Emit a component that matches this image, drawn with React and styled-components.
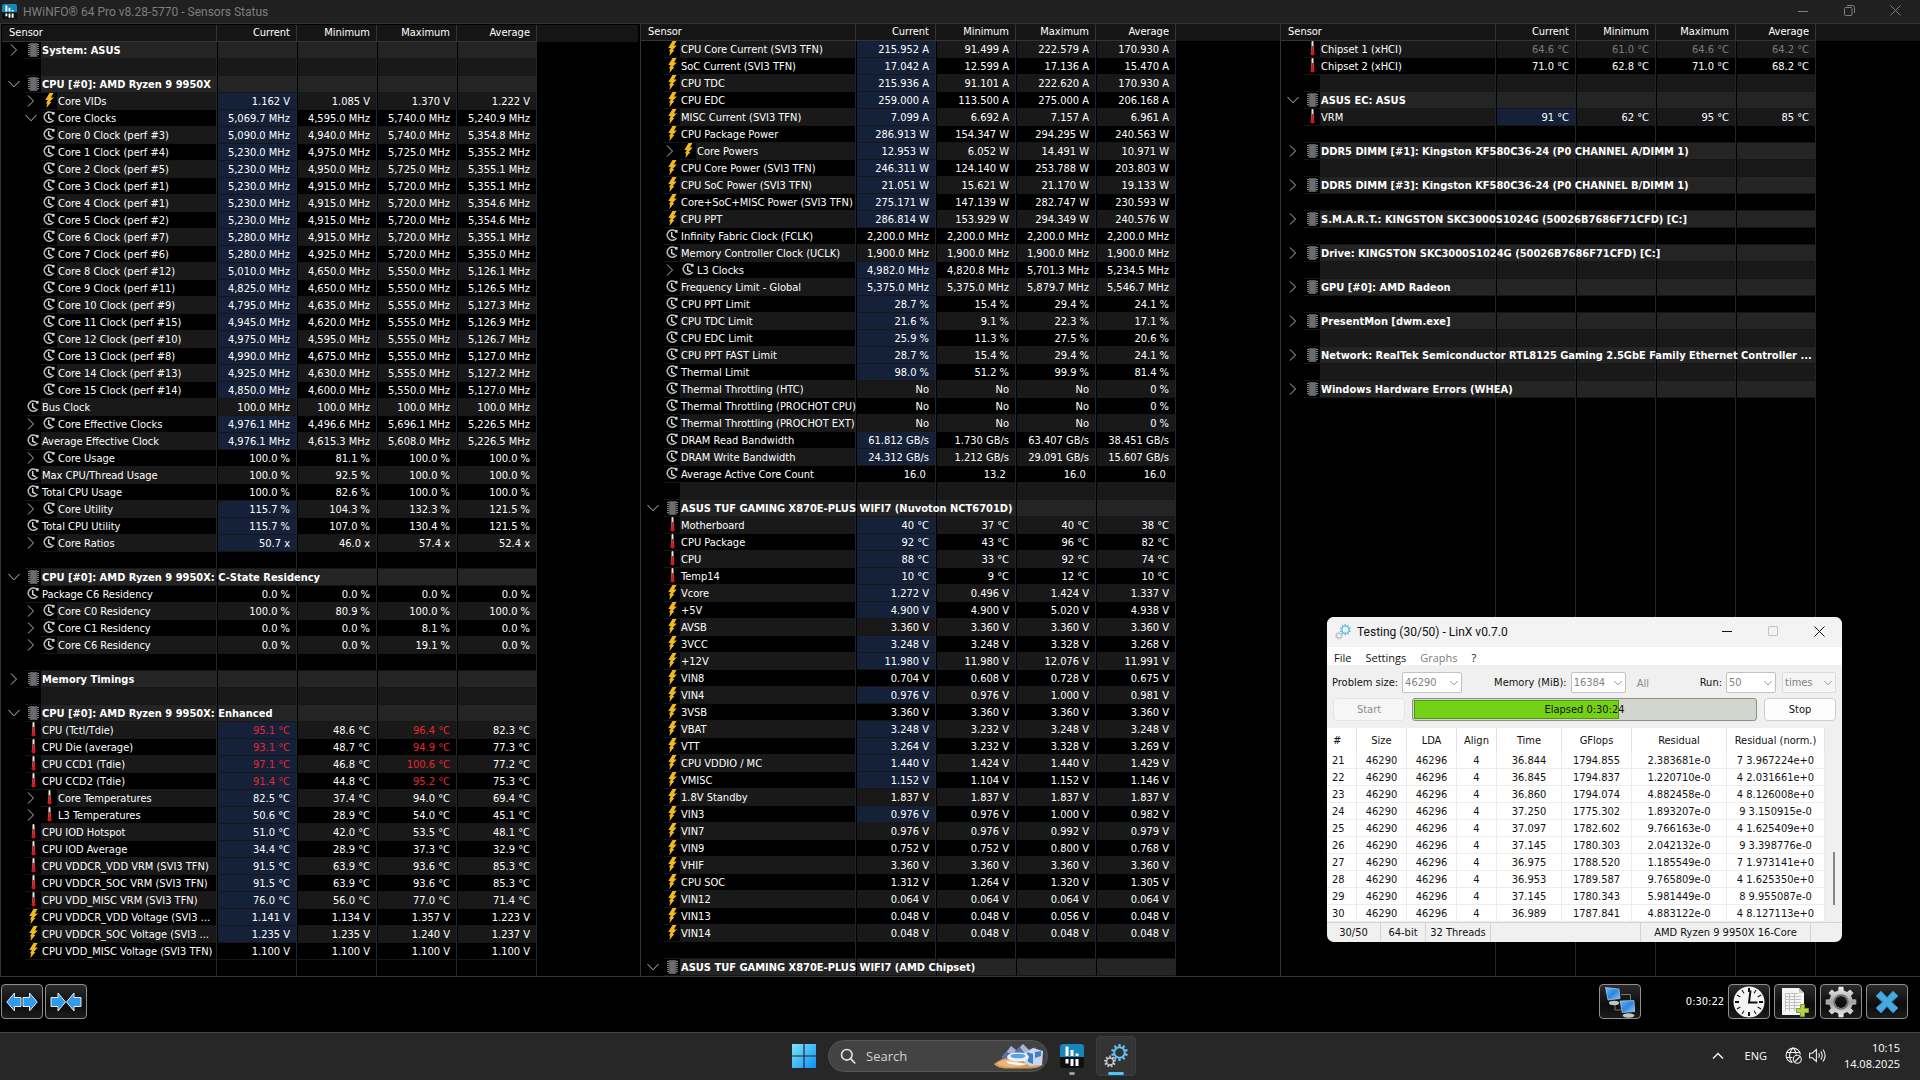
import React from "react";
import styled, { createGlobalStyle } from "styled-components";

/* ---------- palette and fonts ---------- */

const tahoma = '"DejaVu Sans Condensed", "DejaVu Sans", sans-serif';
const segoe = 'Roboto, "Open Sans", sans-serif';
const shell = '"Open Sans", "Noto Sans", sans-serif';

const color = {
  edge: "#343434",
  line: "#161616",
  divider: "#20262e",
  grey: "#191919",
  black: "#000",
  group: "#242424",
  live: "#152138",
};

const GlobalStyle = createGlobalStyle`
  *, *::before, *::after { box-sizing: border-box; }
  html, body { margin: 0; background: #000; }
  body { font: 11px/16px ${tahoma}; color: #fff; overflow: hidden; }
  button, input, select { font: inherit; color: inherit; margin: 0; padding: 0; }
  button { background: none; border: 0; }
  svg { display: block; }
`;

/* ---------- sensor data ---------- */
/* reading: [icon, tree level, name, unit, "current min max avg", marks]
   level: 0 leaf, 1 nested leaf, "+" collapsed branch, "-" expanded branch
   marks: b = live background on Current, r = alert colours, d = dimmed values */

const group = (name, open) => ({ kind: "group", name, open });
const gap = (tone) => ({ kind: "gap", tone });
const read = (icon, level, name, unit, values, marks = "") => ({
  kind: "read",
  icon,
  level,
  name,
  marks,
  values: values.split(" ").map((v) => v.replace("_", "\u00a0") + (unit ? " " + unit : "")),
});

const coreClocks = [
  [3, "5,090.0 4,940.0 5,740.0 5,354.8"],
  [4, "5,230.0 4,975.0 5,725.0 5,355.2"],
  [5, "5,230.0 4,950.0 5,725.0 5,355.1"],
  [1, "5,230.0 4,915.0 5,720.0 5,355.1"],
  [1, "5,230.0 4,915.0 5,720.0 5,354.6"],
  [2, "5,230.0 4,915.0 5,720.0 5,354.6"],
  [7, "5,280.0 4,915.0 5,720.0 5,355.1"],
  [6, "5,280.0 4,925.0 5,720.0 5,355.0"],
  [12, "5,010.0 4,650.0 5,550.0 5,126.1"],
  [11, "4,825.0 4,650.0 5,550.0 5,126.5"],
  [9, "4,795.0 4,635.0 5,555.0 5,127.3"],
  [15, "4,945.0 4,620.0 5,555.0 5,126.9"],
  [10, "4,975.0 4,595.0 5,555.0 5,126.7"],
  [8, "4,990.0 4,675.0 5,555.0 5,127.0"],
  [13, "4,925.0 4,630.0 5,555.0 5,127.2"],
  [14, "4,850.0 4,600.0 5,550.0 5,127.0"],
].map(([perf, v], i) => read("clock", 1, `Core ${i} Clock (perf #${perf})`, "MHz", v, "b"));

const panelOne = [
  group("System: ASUS", false),
  gap("grey"),
  group("CPU [#0]: AMD Ryzen 9 9950X", true),
  read("bolt", "+", "Core VIDs", "V", "1.162 1.085 1.370 1.222", "b"),
  read("clock", "-", "Core Clocks", "MHz", "5,069.7 4,595.0 5,740.0 5,240.9", "b"),
  ...coreClocks,
  read("clock", 0, "Bus Clock", "MHz", "100.0 100.0 100.0 100.0"),
  read("clock", "+", "Core Effective Clocks", "MHz", "4,976.1 4,496.6 5,696.1 5,226.5", "b"),
  read("clock", 0, "Average Effective Clock", "MHz", "4,976.1 4,615.3 5,608.0 5,226.5", "b"),
  read("clock", "+", "Core Usage", "%", "100.0 81.1 100.0 100.0"),
  read("clock", 0, "Max CPU/Thread Usage", "%", "100.0 92.5 100.0 100.0"),
  read("clock", 0, "Total CPU Usage", "%", "100.0 82.6 100.0 100.0"),
  read("clock", "+", "Core Utility", "%", "115.7 104.3 132.3 121.5", "b"),
  read("clock", 0, "Total CPU Utility", "%", "115.7 107.0 130.4 121.5", "b"),
  read("clock", "+", "Core Ratios", "x", "50.7 46.0 57.4 52.4", "b"),
  gap("black"),
  group("CPU [#0]: AMD Ryzen 9 9950X: C-State Residency", true),
  read("clock", 0, "Package C6 Residency", "%", "0.0 0.0 0.0 0.0"),
  read("clock", "+", "Core C0 Residency", "%", "100.0 80.9 100.0 100.0"),
  read("clock", "+", "Core C1 Residency", "%", "0.0 0.0 8.1 0.0"),
  read("clock", "+", "Core C6 Residency", "%", "0.0 0.0 19.1 0.0"),
  gap("black"),
  group("Memory Timings", false),
  gap("grey"),
  group("CPU [#0]: AMD Ryzen 9 9950X: Enhanced", true),
  read("temp", 0, "CPU (Tctl/Tdie)", "°C", "95.1 48.6 96.4 82.3", "br"),
  read("temp", 0, "CPU Die (average)", "°C", "93.1 48.7 94.9 77.3", "br"),
  read("temp", 0, "CPU CCD1 (Tdie)", "°C", "97.1 46.8 100.6 77.2", "br"),
  read("temp", 0, "CPU CCD2 (Tdie)", "°C", "91.4 44.8 95.2 75.3", "br"),
  read("temp", "+", "Core Temperatures", "°C", "82.5 37.4 94.0 69.4", "b"),
  read("temp", "+", "L3 Temperatures", "°C", "50.6 28.9 54.0 45.1", "b"),
  read("temp", 0, "CPU IOD Hotspot", "°C", "51.0 42.0 53.5 48.1", "b"),
  read("temp", 0, "CPU IOD Average", "°C", "34.4 28.9 37.3 32.9", "b"),
  read("temp", 0, "CPU VDDCR_VDD VRM (SVI3 TFN)", "°C", "91.5 63.9 93.6 85.3", "b"),
  read("temp", 0, "CPU VDDCR_SOC VRM (SVI3 TFN)", "°C", "91.5 63.9 93.6 85.3", "b"),
  read("temp", 0, "CPU VDD_MISC VRM (SVI3 TFN)", "°C", "76.0 56.0 77.0 71.4", "b"),
  read("bolt", 0, "CPU VDDCR_VDD Voltage (SVI3 ...", "V", "1.141 1.134 1.357 1.223", "b"),
  read("bolt", 0, "CPU VDDCR_SOC Voltage (SVI3 ...", "V", "1.235 1.235 1.240 1.237", "b"),
  read("bolt", 0, "CPU VDD_MISC Voltage (SVI3 TFN)", "V", "1.100 1.100 1.100 1.100"),
];

const panelTwo = [
  read("bolt", 0, "CPU Core Current (SVI3 TFN)", "A", "215.952 91.499 222.579 170.930", "b"),
  read("bolt", 0, "SoC Current (SVI3 TFN)", "A", "17.042 12.599 17.136 15.470", "b"),
  read("bolt", 0, "CPU TDC", "A", "215.936 91.101 222.620 170.930", "b"),
  read("bolt", 0, "CPU EDC", "A", "259.000 113.500 275.000 206.168", "b"),
  read("bolt", 0, "MISC Current (SVI3 TFN)", "A", "7.099 6.692 7.157 6.961", "b"),
  read("bolt", 0, "CPU Package Power", "W", "286.913 154.347 294.295 240.563", "b"),
  read("bolt", "+", "Core Powers", "W", "12.953 6.052 14.491 10.971", "b"),
  read("bolt", 0, "CPU Core Power (SVI3 TFN)", "W", "246.311 124.140 253.788 203.803", "b"),
  read("bolt", 0, "CPU SoC Power (SVI3 TFN)", "W", "21.051 15.621 21.170 19.133", "b"),
  read("bolt", 0, "Core+SoC+MISC Power (SVI3 TFN)", "W", "275.171 147.139 282.747 230.593", "b"),
  read("bolt", 0, "CPU PPT", "W", "286.814 153.929 294.349 240.576", "b"),
  read("clock", 0, "Infinity Fabric Clock (FCLK)", "MHz", "2,200.0 2,200.0 2,200.0 2,200.0"),
  read("clock", 0, "Memory Controller Clock (UCLK)", "MHz", "1,900.0 1,900.0 1,900.0 1,900.0"),
  read("clock", "+", "L3 Clocks", "MHz", "4,982.0 4,820.8 5,701.3 5,234.5", "b"),
  read("clock", 0, "Frequency Limit - Global", "MHz", "5,375.0 5,375.0 5,879.7 5,546.7", "b"),
  read("clock", 0, "CPU PPT Limit", "%", "28.7 15.4 29.4 24.1", "b"),
  read("clock", 0, "CPU TDC Limit", "%", "21.6 9.1 22.3 17.1", "b"),
  read("clock", 0, "CPU EDC Limit", "%", "25.9 11.3 27.5 20.6", "b"),
  read("clock", 0, "CPU PPT FAST Limit", "%", "28.7 15.4 29.4 24.1", "b"),
  read("clock", 0, "Thermal Limit", "%", "98.0 51.2 99.9 81.4", "b"),
  read("clock", 0, "Thermal Throttling (HTC)", "", "No No No 0_%"),
  read("clock", 0, "Thermal Throttling (PROCHOT CPU)", "", "No No No 0_%"),
  read("clock", 0, "Thermal Throttling (PROCHOT EXT)", "", "No No No 0_%"),
  read("clock", 0, "DRAM Read Bandwidth", "GB/s", "61.812 1.730 63.407 38.451", "b"),
  read("clock", 0, "DRAM Write Bandwidth", "GB/s", "24.312 1.212 29.091 15.607", "b"),
  read("clock", 0, "Average Active Core Count", "", "16.0_ 13.2_ 16.0_ 16.0_"),
  gap("grey"),
  group("ASUS TUF GAMING X870E-PLUS WIFI7 (Nuvoton NCT6701D)", true),
  read("temp", 0, "Motherboard", "°C", "40 37 40 38", "b"),
  read("temp", 0, "CPU Package", "°C", "92 43 96 82", "b"),
  read("temp", 0, "CPU", "°C", "88 33 92 74", "b"),
  read("temp", 0, "Temp14", "°C", "10 9 12 10", "b"),
  read("bolt", 0, "Vcore", "V", "1.272 0.496 1.424 1.337", "b"),
  read("bolt", 0, "+5V", "V", "4.900 4.900 5.020 4.938", "b"),
  read("bolt", 0, "AVSB", "V", "3.360 3.360 3.360 3.360"),
  read("bolt", 0, "3VCC", "V", "3.248 3.248 3.328 3.268", "b"),
  read("bolt", 0, "+12V", "V", "11.980 11.980 12.076 11.991", "b"),
  read("bolt", 0, "VIN8", "V", "0.704 0.608 0.728 0.675"),
  read("bolt", 0, "VIN4", "V", "0.976 0.976 1.000 0.981", "b"),
  read("bolt", 0, "3VSB", "V", "3.360 3.360 3.360 3.360"),
  read("bolt", 0, "VBAT", "V", "3.248 3.232 3.248 3.248", "b"),
  read("bolt", 0, "VTT", "V", "3.264 3.232 3.328 3.269", "b"),
  read("bolt", 0, "CPU VDDIO / MC", "V", "1.440 1.424 1.440 1.429", "b"),
  read("bolt", 0, "VMISC", "V", "1.152 1.104 1.152 1.146", "b"),
  read("bolt", 0, "1.8V Standby", "V", "1.837 1.837 1.837 1.837"),
  read("bolt", 0, "VIN3", "V", "0.976 0.976 1.000 0.982", "b"),
  read("bolt", 0, "VIN7", "V", "0.976 0.976 0.992 0.979"),
  read("bolt", 0, "VIN9", "V", "0.752 0.752 0.800 0.768"),
  read("bolt", 0, "VHIF", "V", "3.360 3.360 3.360 3.360"),
  read("bolt", 0, "CPU SOC", "V", "1.312 1.264 1.320 1.305"),
  read("bolt", 0, "VIN12", "V", "0.064 0.064 0.064 0.064"),
  read("bolt", 0, "VIN13", "V", "0.048 0.048 0.056 0.048"),
  read("bolt", 0, "VIN14", "V", "0.048 0.048 0.048 0.048"),
  gap("black"),
  group("ASUS TUF GAMING X870E-PLUS WIFI7 (AMD Chipset)", true),
];

const panelThree = [
  read("temp", 0, "Chipset 1 (xHCI)", "°C", "64.6 61.0 64.6 64.2", "d"),
  read("temp", 0, "Chipset 2 (xHCI)", "°C", "71.0 62.8 71.0 68.2"),
  gap("grey"),
  group("ASUS EC: ASUS", true),
  read("temp", 0, "VRM", "°C", "91 62 95 85", "b"),
  gap("black"),
  group("DDR5 DIMM [#1]: Kingston KF580C36-24 (P0 CHANNEL A/DIMM 1)", false),
  gap("grey"),
  group("DDR5 DIMM [#3]: Kingston KF580C36-24 (P0 CHANNEL B/DIMM 1)", false),
  gap("black"),
  group("S.M.A.R.T.: KINGSTON SKC3000S1024G (50026B7686F71CFD) [C:]", false),
  gap("black"),
  group("Drive: KINGSTON SKC3000S1024G (50026B7686F71CFD) [C:]", false),
  gap("grey"),
  group("GPU [#0]: AMD Radeon", false),
  gap("black"),
  group("PresentMon [dwm.exe]", false),
  gap("grey"),
  group("Network: RealTek Semiconductor RTL8125 Gaming 2.5GbE Family Ethernet Controller ...", false),
  gap("grey"),
  group("Windows Hardware Errors (WHEA)", false),
];

const withTones = (rows) => {
  let last = "black";
  return rows.map((row) => {
    const tone = row.tone || (last === "grey" ? "black" : "grey");
    last = tone;
    return { ...row, tone: row.kind === "group" ? "group" : tone };
  });
};

const runs = [
  ["21", "36.844", "1794.855", "2.383681e-0", "7 3.967224e+0"],
  ["22", "36.845", "1794.837", "1.220710e-0", "4 2.031661e+0"],
  ["23", "36.860", "1794.074", "4.882458e-0", "4 8.126008e+0"],
  ["24", "37.250", "1775.302", "1.893207e-0", "9 3.150915e-0"],
  ["25", "37.097", "1782.602", "9.766163e-0", "4 1.625409e+0"],
  ["26", "37.145", "1780.303", "2.042132e-0", "9 3.398776e-0"],
  ["27", "36.975", "1788.520", "1.185549e-0", "7 1.973141e+0"],
  ["28", "36.953", "1789.587", "9.765809e-0", "4 1.625350e+0"],
  ["29", "37.145", "1780.343", "5.981449e-0", "8 9.955087e-0"],
  ["30", "36.989", "1787.841", "4.883122e-0", "4 8.127113e+0"],
];

/* ---------- drawings ---------- */

const gearPath = (cx, cy, outer, inner, teeth) => {
  const step = (Math.PI * 2) / teeth;
  const pts = [];
  for (let i = 0; i < teeth; i++) {
    const a = i * step;
    [[-0.3, inner], [-0.2, outer], [0.2, outer], [0.3, inner]].forEach(([k, r]) => {
      pts.push(`${(cx + r * Math.sin(a + k * step)).toFixed(2)} ${(cy - r * Math.cos(a + k * step)).toFixed(2)}`);
    });
  }
  return `M${pts.join("L")}Z`;
};

const hole = (cx, cy, r) => `M${cx - r} ${cy}a${r} ${r} 0 1 0 ${2 * r} 0a${r} ${r} 0 1 0 ${-2 * r} 0Z`;

const ChipIcon = () => (
  <svg width="11" height="14" viewBox="0 0 11 14">
    <path d="M0 1.5h11M0 3.5h11M0 5.5h11M0 7.5h11M0 9.5h11M0 11.5h11" stroke="#8a8a8a" />
    <rect x="1.5" width="8" height="14" fill="#58585b" />
    <rect x="3" y="1" width="5" height="12" fill="#6c6c70" />
  </svg>
);

const BoltIcon = () => (
  <svg width="9" height="15" viewBox="0 0 9 15">
    <path d="M4.5 0h4L6 4.6h2.8L4.6 9H6.4L1.4 15l.8-4.6H1L2.8 7H.3Z" fill="#f0b91c" />
  </svg>
);

const ClockIcon = () => (
  <svg width="12" height="13" viewBox="0 0 12 13" fill="none">
    <path d="M9 1.7A5.1 5.1 0 1 0 10.6 9" stroke="#b9b9b9" strokeWidth="1.7" />
    <path d="M5.7 3v4.2l3 1.6" stroke="#d6d6d6" strokeWidth="1.5" />
    <path d="M9 .9h2.6v2.8H9Z" fill="#cfcfcf" />
  </svg>
);

const TempIcon = () => (
  <svg width="5" height="15" viewBox="0 0 5 15">
    <rect x="1.5" width="2" height="13" rx="1" fill="#e8e8e8" />
    <rect x="1.5" y="5" width="2" height="8" fill="#d8151b" />
    <circle cx="2.5" cy="12.4" r="2.1" fill="#d8151b" />
  </svg>
);

const icons = { chip: ChipIcon, bolt: BoltIcon, clock: ClockIcon, temp: TempIcon };

const ChevronRight = () => (
  <svg width="8" height="12" viewBox="0 0 8 12" fill="none" stroke="#b8b8b8">
    <path d="M1 .5l5.5 5.5L1 11.5" />
  </svg>
);

const ChevronDown = ({ size = 12, stroke = "#b8b8b8" }) => (
  <svg width={size} height={size / 2 + 2} viewBox="0 0 12 8" fill="none" stroke={stroke}>
    <path d="M.5 1L6 6.8 11.5 1" strokeWidth={12 / size} />
  </svg>
);

const HwLogo = ({ size }) => (
  <svg width={size} height={size} viewBox="0 0 24 24">
    <rect width="24" height="24" rx="3" fill="#0f0f10" />
    <path d="M0 13V3a3 3 0 0 1 3-3h18a3 3 0 0 1 3 3v10Z" fill="#1786bd" />
    <path d="M5.5 2.5h3V12h-3ZM10.5 6h3v6h-3ZM15.5 9.5h3V12h-3ZM5.5 15h3v4.5h-3ZM10.5 15h3v7h-3ZM15.5 15h3v7h-3Z" fill="#fff" />
  </svg>
);

const GearsLogo = ({ size, small }) => (
  <svg width={size} height={size} viewBox="0 0 24 24" fillRule="evenodd">
    <path d={gearPath(15.5, 8.5, 8.5, 6.2, 10) + hole(15.5, 8.5, 4.3)} fill="#63c0ee" />
    <path d={gearPath(6, 17.5, 6, 4.2, 9) + hole(6, 17.5, 2.7)} fill={small} />
  </svg>
);

const ArrowsOut = () => (
  <svg width="32" height="20" viewBox="0 0 32 20" fill="#2f9bea" stroke="#e4eef5" strokeWidth="1">
    <path d="M.8 10L8.5 1v4.5H15v9H8.5V19Z" />
    <path d="M31.2 10L23.5 1v4.5H17v9h6.5V19Z" />
  </svg>
);

const ArrowsIn = () => (
  <svg width="32" height="20" viewBox="0 0 32 20" fill="#2f9bea" stroke="#e4eef5" strokeWidth="1">
    <path d="M15.5 10L8 1v4.5H1v9h7V19Z" />
    <path d="M16.5 10L24 1v4.5h7v9h-7V19Z" />
  </svg>
);

const NetworkIcon = () => (
  <svg width="32" height="32" viewBox="0 0 32 32">
    <defs>
      <linearGradient id="screen" x1="0" y1="0" x2="1" y2="1">
        <stop offset="0" stopColor="#6db8f5" />
        <stop offset=".5" stopColor="#2b86e0" />
        <stop offset="1" stopColor="#8fc8f8" />
      </linearGradient>
    </defs>
    <path d="M17 8.5h9.5V14M11 18v6h6" fill="none" stroke="#777" />
    <ellipse cx="10" cy="17" rx="5" ry="2.2" fill="#bfc6cb" />
    <path d="M1.5 1.5L15 3l1 9.5L4 14Z" fill="url(#screen)" stroke="#cfe3f2" strokeWidth=".6" />
    <ellipse cx="24.5" cy="29.5" rx="6" ry="2.2" fill="#bfc6cb" />
    <path d="M16 15l14-.5.7 11-12.5 1Z" fill="url(#screen)" stroke="#cfe3f2" strokeWidth=".6" />
  </svg>
);

const ClockFace = () => (
  <svg width="32" height="32" viewBox="0 0 32 32">
    <circle cx="16" cy="16" r="15.5" fill="#f4f4f4" />
    {[0, 30, 60, 90, 120, 150, 180, 210, 240, 270, 300, 330].map((a) => (
      <path key={a} d="M16 2v4" stroke="#111" strokeWidth={a % 90 ? 1 : 2} transform={`rotate(${a} 16 16)`} />
    ))}
    <path d="M17.5 4.5L16 16.5h8.5" fill="none" stroke="#111" strokeWidth="2" />
  </svg>
);

const SheetIcon = () => (
  <svg width="30" height="30" viewBox="0 0 30 30">
    <path d="M2 1h17l5 5v22H2Z" fill="#f5f5f5" />
    <path d="M19 1v5h5Z" fill="#c4c4c4" />
    <path d="M5 6.5h13M5 9.5h16M5 12.5h16M5 15.5h16M5 18.5h16M5 21.5h16M5.5 6v18M9.5 6v18M14.5 6v18" stroke="#c0c0c0" fill="none" />
    <path d="M20.5 17.5h4v4h4v4h-4v4h-4v-4h-4v-4h4Z" fill="#b5d34a" stroke="#83a02a" />
  </svg>
);

const GearIcon = () => (
  <svg width="32" height="32" viewBox="0 0 32 32">
    <defs>
      <linearGradient id="steel" x1="0" y1="0" x2="0" y2="1">
        <stop offset="0" stopColor="#f2f2f2" />
        <stop offset=".5" stopColor="#a2a2a2" />
        <stop offset="1" stopColor="#ededed" />
      </linearGradient>
    </defs>
    <path fillRule="evenodd" d={gearPath(16, 16, 15.5, 11.8, 8) + hole(16, 16, 6)} fill="url(#steel)" />
    <circle cx="16" cy="16" r="7" fill="none" stroke="#6d6d6d" strokeWidth="1.5" />
  </svg>
);

const CrossIcon = () => (
  <svg width="24" height="24" viewBox="0 0 24 24">
    <path d="M6 1l6 6.5L18 1l5 5-6.5 6L23 18l-5 5-6-6.5L6 23l-5-5 6.5-6L1 6Z" fill="#47a9de" stroke="#2584b8" />
  </svg>
);

const WindowsLogo = () => (
  <svg width="24" height="24" viewBox="0 0 24 24">
    <defs>
      <linearGradient id="pane" x1="0" y1="0" x2="24" y2="24" gradientUnits="userSpaceOnUse">
        <stop offset="0" stopColor="#7de3fb" />
        <stop offset="1" stopColor="#0a90f5" />
      </linearGradient>
    </defs>
    <path d="M0 0h11.4v11.4H0ZM12.6 0H24v11.4H12.6ZM0 12.6h11.4V24H0ZM12.6 12.6H24V24H12.6Z" fill="url(#pane)" />
  </svg>
);

const SearchIcon = () => (
  <svg width="16" height="16" viewBox="0 0 16 16" fill="none" stroke="#e6e6e6" strokeWidth="1.6">
    <circle cx="6.8" cy="6.8" r="5.3" />
    <path d="M10.6 10.6l4.2 4.4" strokeLinecap="round" />
  </svg>
);

const SearchArt = () => (
  <svg width="50" height="26" viewBox="0 0 50 26">
    <path d="M8 13L17 3l5 4 7-6 6 6 6-3 7 9v7H8Z" fill="#59709f" />
    <path d="M13 9l4-6 5 4-3 5ZM26 4l3-3 6 6-4 4Z" fill="#a9b3d4" />
    <path d="M0 21q7-6 15-6 12 0 34 6-3 4-12 4.5H12Q3 25 0 21Z" fill="#d69a5a" />
    <path d="M3 20q8-5 16-3l12 5q-8 3-17 2T3 20Z" fill="#eab77a" />
    <path d="M30 10l9-5 10 3-1 14-12 1-6-4Z" fill="#c9d8ec" />
    <path d="M33 9l6 2v10l-5-2ZM41 9l6-1v5l-6 2Z" fill="#3f7fc4" />
    <ellipse cx="24" cy="14" rx="11" ry="4.5" fill="#e8f1fa" />
    <ellipse cx="24" cy="13" rx="7.5" ry="2.3" fill="#5aa2dd" />
    <path d="M12 18l22 3-8 1.5-12-2Z" fill="#f5f8fc" />
  </svg>
);

const TrayChevron = () => (
  <svg width="12" height="8" viewBox="0 0 12 8" fill="none" stroke="#f0f0f0" strokeWidth="1.5">
    <path d="M1 6.5l5-5 5 5" />
  </svg>
);

const GlobeOff = () => (
  <svg width="17" height="17" viewBox="0 0 17 17" fill="none" stroke="#eee" strokeWidth="1.1">
    <path d="M7.5 15.5A7.2 7.2 0 1 1 15.4 7.5" />
    <path d="M7 15.3C3.6 11 3.6 5 8 .9c2 2 3 4 3.2 6.6M1.2 5.5h13.6M1.2 10.5h6.3" />
    <circle cx="12.3" cy="12.3" r="4" />
    <path d="M9.5 15l5.6-5.5" />
  </svg>
);

const Speaker = () => (
  <svg width="17" height="15" viewBox="0 0 17 15" fill="none" stroke="#eee" strokeWidth="1.1">
    <path d="M.6 5.2h2.8L7.4 1.5v12L3.4 9.800H.6Z" />
    <path d="M9.6 5.3q1.4 2.2 0 4.4M11.8 3.4q2.8 4.1 0 8.2M14 1.5q4.2 6 0 12" />
  </svg>
);

/* ---------- main window ---------- */

const Desktop = styled.div`
  display: flex;
  flex-direction: column;
  height: 100vh;
  position: relative;
  background: #000;
`;

const TitleBar = styled.header`
  display: flex;
  align-items: center;
  height: 23px;
  padding: 0 2px;
  gap: 6px;
  background: #202020;
  color: #7f7f7f;
`;

const WindowTitle = styled.h1`
  flex: 1;
  margin: 0;
  font: 12px/18px ${segoe};
`;

const Caption = styled.div`
  display: flex;
  height: 100%;
`;

const CaptionButton = styled.button`
  display: grid;
  place-items: center;
  width: 46px;
  height: 100%;
  padding-bottom: 2px;
  color: ${(p) => (p.disabled ? "#c4c4c4" : "inherit")};
`;

const Panels = styled.main`
  flex: 1;
  min-height: 0;
  display: grid;
  grid-template-columns: repeat(3, minmax(0, 1fr));
  grid-template-rows: minmax(0, 1fr);
  border-top: 1px solid ${color.edge};
  border-bottom: 1px solid ${color.edge};
`;

const Panel = styled.section`
  display: flex;
  flex-direction: column;
  min-height: 0;
  overflow: hidden;
  border-left: 1px solid ${color.edge};
  padding: ${(p) => (p.$focused ? "1px 2px 0 1px" : 0)};
`;

const SensorTable = styled.table`
  flex: none;
  width: 100%;
  table-layout: fixed;
  border-collapse: separate;
  border-spacing: 0;
`;

const NameCol = styled.col`
  width: 215px;
`;

const ValueCol = styled.col`
  width: 80px;
`;

const Row = styled.tr`
  height: 17px;
`;

const Rails = styled.div`
  flex: 1;
  display: grid;
  grid-template-columns: 215px repeat(4, 80px);
`;

const Rail = styled.span`
  border-right: 1px solid ${color.divider};
`;

const HeadCell = styled.th`
  height: 17px;
  padding: ${(p) => (p.$name ? "0 0 0 7px" : "0 6px 0 0")};
  text-align: ${(p) => (p.$name ? "left" : "right")};
  font-weight: 400;
  background: #151515;
  border-right: ${(p) => (p.$rest ? 0 : "1px solid #343434")};
  border-bottom: 1px solid ${(p) => (p.$rest ? "#151515" : "#343434")};
`;

const NameCell = styled.td`
  padding: 0;
  border-right: 1px solid ${color.divider};
`;

const NameLine = styled.div`
  display: flex;
  height: 17px;
`;

const Slot = styled.span`
  flex: none;
  display: grid;
  align-items: center;
  justify-items: ${(p) => (p.$start ? "start" : "center")};
  width: ${(p) => (p.$wide ? "23px" : "16px")};
  height: 17px;
  padding-bottom: 1px;
  border-bottom: 1px solid ${(p) => (p.$ruled ? color.line : "transparent")};
`;

const Toggle = styled.button`
  display: grid;
  place-items: center;
  width: 12px;
  height: 12px;
`;

const Label = styled.span`
  flex: 1;
  min-width: 0;
  height: 17px;
  padding: 2px 0 0 1px;
  line-height: 14px;
  white-space: nowrap;
  font-weight: ${(p) => (p.$tone === "group" ? 700 : 400)};
  background: ${(p) => color[p.$tone]};
  border-bottom: 1px solid ${color.line};
`;

const ValueCell = styled.td`
  height: 17px;
  padding: 2px 6px 0 0;
  line-height: 14px;
  text-align: right;
  white-space: nowrap;
  color: ${(p) => (p.$alert ? "#e8262c" : p.$dim ? "#7d7d7d" : "#fff")};
  background: ${(p) => color[p.$tone]};
  border-left: 1px solid #000;
  border-right: 1px solid ${color.divider};
  border-bottom: 1px solid ${color.line};
`;

const RestCell = styled.td`
  padding: 0;
`;

const ToolRow = styled.footer`
  display: flex;
  align-items: flex-start;
  height: 55px;
  padding: 7px 12px 0 1px;
  background: #000;
`;

const ToolGroup = styled.div`
  display: flex;
  align-items: center;
  gap: ${(p) => p.$gap}px;
`;

const Spacer = styled.div`
  flex: 1;
`;

const ToolButton = styled.button`
  display: grid;
  place-items: center;
  width: 42px;
  height: 35px;
  border: 1px solid #8f8f8f;
  border-radius: 4px;
  background: linear-gradient(#2b2b2b, #0c0c0c 60%, #1c1c1c);
`;

const Uptime = styled.time`
  width: 79px;
  text-align: right;
`;

/* ---------- LinX window ---------- */

const Dialog = styled.section`
  position: absolute;
  top: 617px;
  right: 78px;
  width: 515px;
  overflow: hidden;
  border-radius: 7px;
  background: #f0f0f0;
  color: #111;
`;

const DialogBar = styled.header`
  display: flex;
  align-items: center;
  gap: 6px;
  height: 30px;
  padding-left: 8px;
  background: #f3f3f3;
`;

const DialogTitle = styled.h2`
  flex: 1;
  margin: 0;
  font: 12px/18px ${segoe};
`;

const MenuBar = styled.nav`
  display: flex;
  gap: 14px;
  height: 18px;
  padding-left: 7px;
  background: #fff;
`;

const MenuItem = styled.button`
  font: 11px/18px ${shell};
  padding-top: 2px;
  color: ${(p) => (p.disabled ? "#7d7d7d" : "#111")};
`;

const Controls = styled.div`
  display: flex;
  align-items: center;
  height: 21px;
  margin: 7px 6px 5px 5px;
`;

const Field = styled.label`
  display: flex;
  align-items: center;
  gap: 4px;
  margin-left: ${(p) => p.$push || 0};
`;

const SelectBox = styled.span`
  position: relative;
  display: block;
  width: ${(p) => p.$width}px;
  height: 21px;
  margin-left: ${(p) => (p.$spaced ? "6px" : 0)};
`;

const Select = styled.select`
  appearance: none;
  width: 100%;
  height: 100%;
  padding-left: 2px;
  border: 1px solid ${(p) => (p.$flat ? "#dcdcdc" : "#c2c2c2")};
  border-radius: 2px;
  background: ${(p) => (p.$flat ? "#f5f5f5" : "#fff")};
  color: #838383;
  opacity: 1;
`;

const SelectMark = styled.span`
  position: absolute;
  right: 4px;
  top: 8px;
  pointer-events: none;
`;

const AllButton = styled.button`
  margin-left: 11px;
  padding-top: 3px;
  color: #8a8a8a;
`;

const ActionRow = styled.div`
  display: flex;
  gap: 7px;
  height: 23px;
  margin: 0 6px 7px;
`;

const ActionButton = styled.button`
  width: 72px;
  border: 1px solid ${(p) => (p.disabled ? "#e4e4e4" : "#cfcfcf")};
  border-radius: 4px;
  background: ${(p) => (p.disabled ? "#f6f6f6" : "#fdfdfd")};
  color: ${(p) => (p.disabled ? "#8f8f8f" : "#111")};
`;

const Progress = styled.div`
  flex: 1;
  display: grid;
  align-items: center;
  border: 1px solid #8d8f8a;
  border-radius: 3px;
  padding: 1px;
  background: #d3d6cf;
`;

const ProgressFill = styled.span`
  grid-area: 1 / 1;
  height: 19px;
  border: 1px solid #4f9a0b;
  background: #74d116;
`;

const ProgressText = styled.span`
  grid-area: 1 / 1;
  text-align: center;
`;

const RunArea = styled.div`
  display: grid;
  grid-template-columns: 498px 1fr;
`;

const RunTable = styled.table`
  table-layout: fixed;
  width: 100%;
  border-spacing: 0;
  background: #fff;
`;

const RunCol = styled.col`
  width: ${(p) => p.$width}px;
`;

const RunHead = styled.th`
  height: 24px;
  padding: ${(p) => (p.$first ? "2px 0 0 6px" : "2px 0 0")};
  text-align: ${(p) => (p.$first ? "left" : "center")};
  font-weight: 400;
  border-right: 1px solid #e2e2e2;
`;

const RunCell = styled.td`
  height: 17px;
  padding: ${(p) => (p.$first ? "2px 0 0 5px" : "2px 0 0")};
  text-align: ${(p) => (p.$first ? "left" : "center")};
  line-height: 14px;
  white-space: nowrap;
  border-right: 1px solid #ececec;
  border-bottom: 1px solid #ececec;
`;

const ScrollTrack = styled.div`
  display: flex;
  justify-content: center;
  align-items: flex-end;
  padding-bottom: 17px;
`;

const ScrollThumb = styled.span`
  width: 2px;
  height: 53px;
  background: #868686;
`;

const StatusBar = styled.footer`
  display: grid;
  grid-template-columns: 54px 45px 65px 150px 170px 1fr;
  height: 20px;
  border-top: 1px solid #d4d4d4;
`;

const StatusCell = styled.span`
  padding-top: 2px;
  text-align: center;
  white-space: nowrap;
  border-right: 1px solid #d4d4d4;
`;

/* ---------- taskbar ---------- */

const Taskbar = styled.nav`
  display: grid;
  grid-template-columns: 1fr auto 1fr;
  height: 48px;
  padding-bottom: 2px;
  border-top: 1px solid #464646;
  background: #272727;
`;

const TaskItems = styled.div`
  grid-column: 2;
  display: flex;
  align-items: center;
`;

const TaskButton = styled.button`
  position: relative;
  display: grid;
  place-items: center;
  width: 40px;
  height: 40px;
  margin: 0 2px;
  border: 1px solid ${(p) => (p.$active ? "#3d3d3d" : "transparent")};
  border-radius: 4px;
  background: ${(p) => (p.$active ? "#343434" : "none")};
`;

const RunMark = styled.span`
  position: absolute;
  bottom: 0;
  left: 50%;
  transform: translateX(-50%);
  width: ${(p) => (p.$active ? "16px" : "6px")};
  height: 3px;
  border-radius: 2px;
  background: ${(p) => (p.$active ? "#4cc2ff" : "#9a9a9a")};
`;

const SearchPill = styled.label`
  display: flex;
  align-items: center;
  width: 220px;
  height: 32px;
  margin: 0 2px;
  padding: 0 3px 0 11px;
  gap: 10px;
  border: 1px solid #545454;
  border-radius: 16px;
  background: #434343;
`;

const SearchInput = styled.input`
  flex: 1;
  min-width: 0;
  border: 0;
  outline: 0;
  background: none;
  font: 13px/18px ${shell};
  &::placeholder { color: #d2d2d2; opacity: 1; }
`;

const Tray = styled.div`
  grid-column: 3;
  display: flex;
  justify-content: flex-end;
  align-items: center;
  padding-right: 20px;
  font: 11px/16px ${shell};
`;

const TrayItem = styled.button`
  display: flex;
  align-items: center;
  gap: 7px;
  margin-right: ${(p) => p.$after}px;
`;

const TrayClock = styled.time`
  width: 58px;
  text-align: right;
`;

/* ---------- composition ---------- */

const columns = ["Current", "Minimum", "Maximum", "Average"];

function Branch({ open, name }) {
  return <Toggle aria-label={`Toggle ${name}`}>{open ? <ChevronDown /> : <ChevronRight />}</Toggle>;
}

function SensorRow({ row }) {
  if (row.kind === "gap") {
    return (
      <Row>
        <NameCell>
          <NameLine>
            <Slot $wide />
            <Slot $ruled />
            <Label $tone={row.tone} />
          </NameLine>
        </NameCell>
        {columns.map((c) => <ValueCell key={c} $tone={row.tone} />)}
        <RestCell />
      </Row>
    );
  }
  const isGroup = row.kind === "group";
  const Icon = icons[isGroup ? "chip" : row.icon];
  const branch = row.level === "+" || row.level === "-";
  const marks = row.marks || "";
  return (
    <Row>
      <NameCell>
        <NameLine>
          <Slot $wide>{isGroup && <Branch open={row.open} name={row.name} />}</Slot>
          {(branch || row.level === 1) && (
            <Slot $start>{branch && <Branch open={row.level === "-"} name={row.name} />}</Slot>
          )}
          <Slot $ruled><Icon /></Slot>
          <Label $tone={row.tone}>{row.name}</Label>
        </NameLine>
      </NameCell>
      {columns.map((c, i) => (
        <ValueCell
          key={c}
          $tone={i === 0 && marks.includes("b") ? "live" : row.tone}
          $alert={marks.includes("r") && i % 2 === 0}
          $dim={marks.includes("d")}
        >
          {isGroup ? null : row.values[i]}
        </ValueCell>
      ))}
      <RestCell />
    </Row>
  );
}

function SensorPanel({ rows, focused, label }) {
  return (
    <Panel $focused={focused} aria-label={label}>
      <SensorTable>
        <colgroup>
          <NameCol />
          {columns.map((c) => <ValueCol key={c} />)}
          <col />
        </colgroup>
        <thead>
          <Row>
            <HeadCell $name>Sensor</HeadCell>
            {columns.map((c) => <HeadCell key={c}>{c}</HeadCell>)}
            <HeadCell $rest />
          </Row>
        </thead>
        <tbody>
          {withTones(rows).map((row, i) => <SensorRow key={i} row={row} />)}
        </tbody>
      </SensorTable>
      <Rails>
        <Rail />
        {columns.map((c) => <Rail key={c} />)}
      </Rails>
    </Panel>
  );
}

function WindowButtons({ maxOff, restore }) {
  return (
    <Caption>
      <CaptionButton aria-label="Minimize">
        <svg width="10" height="10" viewBox="0 0 10 10" stroke="currentColor"><path d="M0 5.5h10" /></svg>
      </CaptionButton>
      <CaptionButton disabled={maxOff} aria-label="Maximize">
        <svg width="11" height="11" viewBox="0 0 11 11" fill="none" stroke="currentColor">
          {restore
            ? <path d="M.5 3.5q0-1 1-1h5.500q1 0 1 1V9.500q0 1-1 1H1.500q-1 0-1-1ZM3 .5h5.500q2 0 2 2V8" />
            : <rect x=".5" y=".5" width="9" height="9" rx=".5" />}
        </svg>
      </CaptionButton>
      <CaptionButton aria-label="Close">
        <svg width="11" height="11" viewBox="0 0 11 11" stroke="currentColor"><path d="M.5.5l10 10M10.5.5l-10 10" /></svg>
      </CaptionButton>
    </Caption>
  );
}

function Combo({ value, width, flat, spaced, label }) {
  return (
    <SelectBox $width={width} $spaced={spaced}>
      <Select disabled $flat={flat} aria-label={label} defaultValue={value}>
        <option>{value}</option>
      </Select>
      <SelectMark><ChevronDown size={8} stroke="#999" /></SelectMark>
    </SelectBox>
  );
}

function LinX() {
  return (
    <Dialog aria-label="LinX">
      <DialogBar>
        <GearsLogo size={16} small="#bdbdbd" />
        <DialogTitle>Testing (30/50) - LinX v0.7.0</DialogTitle>
        <WindowButtons maxOff />
      </DialogBar>
      <MenuBar>
        <MenuItem>File</MenuItem>
        <MenuItem>Settings</MenuItem>
        <MenuItem disabled>Graphs</MenuItem>
        <MenuItem>?</MenuItem>
      </MenuBar>
      <Controls>
        <Field>Problem size:<Combo value="46290" width={60} label="Problem size" /></Field>
        <Field $push="32px">Memory (MiB):<Combo value="16384" width={55} label="Memory (MiB)" /></Field>
        <AllButton disabled>All</AllButton>
        <Field $push="auto">Run:<Combo value="50" width={50} label="Run" /></Field>
        <Combo value="times" width={54} flat spaced label="Run unit" />
      </Controls>
      <ActionRow>
        <ActionButton disabled>Start</ActionButton>
        <Progress role="progressbar" aria-valuenow={60} aria-valuemin={0} aria-valuemax={100}>
          <ProgressFill style={{ width: `${(30 / 50) * 100}%` }} />
          <ProgressText>Elapsed 0:30:24</ProgressText>
        </Progress>
        <ActionButton>Stop</ActionButton>
      </ActionRow>
      <RunArea>
        <RunTable>
          <colgroup>
            {[30, 50, 50, 40, 65, 70, 95, 98].map((w, i) => <RunCol key={i} $width={w} />)}
          </colgroup>
          <thead>
            <tr>
              {["#", "Size", "LDA", "Align", "Time", "GFlops", "Residual", "Residual (norm.)"].map((h, i) => (
                <RunHead key={h} $first={i === 0}>{h}</RunHead>
              ))}
            </tr>
          </thead>
          <tbody>
            {runs.map(([n, time, flops, res, norm]) => (
              <tr key={n}>
                {[n, "46290", "46296", "4", time, flops, res, norm].map((v, i) => (
                  <RunCell key={i} $first={i === 0}>{v}</RunCell>
                ))}
              </tr>
            ))}
          </tbody>
        </RunTable>
        <ScrollTrack><ScrollThumb /></ScrollTrack>
      </RunArea>
      <StatusBar>
        <StatusCell>30/50</StatusCell>
        <StatusCell>64-bit</StatusCell>
        <StatusCell>32 Threads</StatusCell>
        <StatusCell />
        <StatusCell>AMD Ryzen 9 9950X 16-Core</StatusCell>
      </StatusBar>
    </Dialog>
  );
}

export default function App() {
  return (
    <Desktop>
      <GlobalStyle />
      <TitleBar>
        <HwLogo size={15} />
        <WindowTitle>HWiNFO® 64 Pro v8.28-5770 - Sensors Status</WindowTitle>
        <WindowButtons restore />
      </TitleBar>
      <Panels>
        <SensorPanel rows={panelOne} focused label="Sensors 1" />
        <SensorPanel rows={panelTwo} label="Sensors 2" />
        <SensorPanel rows={panelThree} label="Sensors 3" />
      </Panels>
      <ToolRow>
        <ToolGroup $gap={2}>
          <ToolButton aria-label="Expand columns"><ArrowsOut /></ToolButton>
          <ToolButton aria-label="Shrink columns"><ArrowsIn /></ToolButton>
        </ToolGroup>
        <Spacer />
        <ToolGroup $gap={4}>
          <ToolButton aria-label="Remote monitoring"><NetworkIcon /></ToolButton>
          <Uptime>0:30:22</Uptime>
          <ToolButton aria-label="Reset clock"><ClockFace /></ToolButton>
          <ToolButton aria-label="Start logging"><SheetIcon /></ToolButton>
          <ToolButton aria-label="Settings"><GearIcon /></ToolButton>
          <ToolButton aria-label="Close sensors"><CrossIcon /></ToolButton>
        </ToolGroup>
      </ToolRow>
      <Taskbar>
        <TaskItems>
          <TaskButton aria-label="Start"><WindowsLogo /></TaskButton>
          <SearchPill>
            <SearchIcon />
            <SearchInput placeholder="Search" aria-label="Search" />
            <SearchArt />
          </SearchPill>
          <TaskButton aria-label="HWiNFO"><HwLogo size={24} /><RunMark /></TaskButton>
          <TaskButton $active aria-label="LinX"><GearsLogo size={24} small="#c9c9c9" /><RunMark $active /></TaskButton>
        </TaskItems>
        <Tray>
          <TrayItem $after={21} aria-label="Show hidden icons"><TrayChevron /></TrayItem>
          <TrayItem $after={18}>ENG</TrayItem>
          <TrayItem $after={16} aria-label="Network and volume"><GlobeOff /><Speaker /></TrayItem>
          <TrayClock>10:15<br />14.08.2025</TrayClock>
        </Tray>
      </Taskbar>
      <LinX />
    </Desktop>
  );
}
